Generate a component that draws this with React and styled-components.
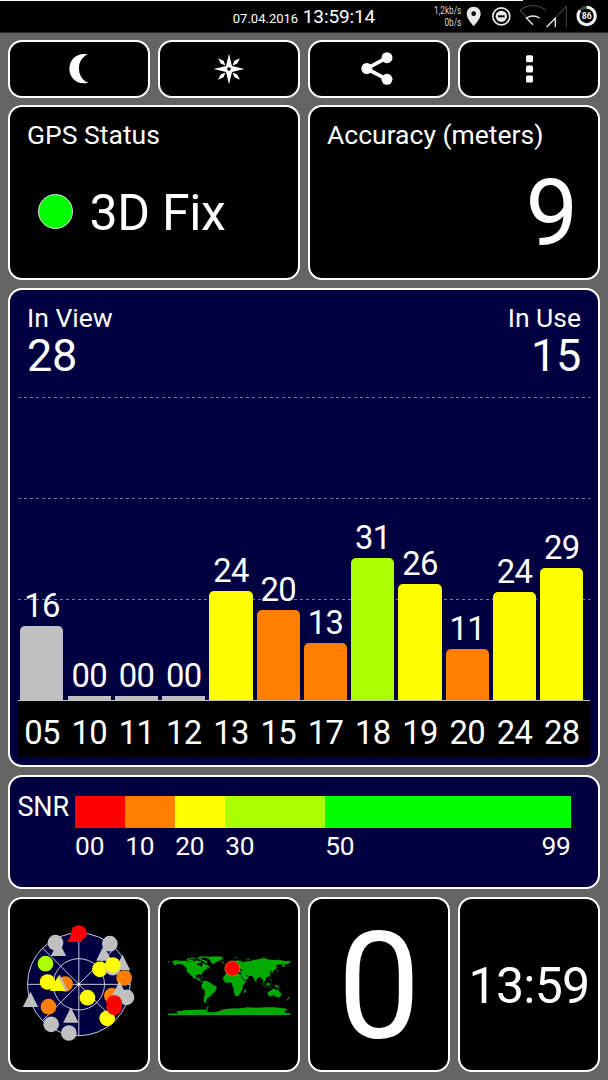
import React from 'react';
import styled, { createGlobalStyle } from 'styled-components';

const satellites = [
  { id: '05', snr: '16', height: 73.5, color: '#c0c0c0' },
  { id: '10', snr: '00', height: 4, color: '#c0c0c0' },
  { id: '11', snr: '00', height: 4, color: '#c0c0c0' },
  { id: '12', snr: '00', height: 4, color: '#c0c0c0' },
  { id: '13', snr: '24', height: 109, color: '#ffff00' },
  { id: '15', snr: '20', height: 90, color: '#ff8000' },
  { id: '17', snr: '13', height: 57, color: '#ff8000' },
  { id: '18', snr: '31', height: 142, color: '#aaff00' },
  { id: '19', snr: '26', height: 115.5, color: '#ffff00' },
  { id: '20', snr: '11', height: 51, color: '#ff8000' },
  { id: '24', snr: '24', height: 108, color: '#ffff00' },
  { id: '28', snr: '29', height: 132, color: '#ffff00' },
];

const scale = [
  { labels: ['00'], color: '#ff0000' },
  { labels: ['10'], color: '#ff8000' },
  { labels: ['20'], color: '#ffff00' },
  { labels: ['30'], color: '#aaff00' },
  { labels: ['50', '99'], color: '#00ff00' },
];

// sky view items in drawing order: c = circle, t = triangle
const sky = [
  ['t', 145, 86, '#c0c0c0'],
  ['c', 136, 68, '#c0c0c0'],
  ['c', 206, 39, '#ff0000'],
  ['c', 106, 131, '#aaff00'],
  ['c', 165, 192, '#ff8000'],
  ['c', 112, 186, '#ffff00'],
  ['c', 115, 260, '#ff8000'],
  ['t', 61, 239, '#c0c0c0'],
  ['t', 182, 286, '#c0c0c0'],
  ['c', 123, 313, '#c0c0c0'],
  ['c', 176, 339, '#c0c0c0'],
  ['t', 281, 100, '#c0c0c0'],
  ['c', 299, 71, '#c0c0c0'],
  ['t', 337, 128, '#c0c0c0'],
  ['c', 269, 148, '#ffff00'],
  ['c', 308, 143, '#c0c0c0'],
  ['c', 308, 135, '#ffff00'],
  ['c', 342, 174, '#ff8000'],
  ['c', 232, 233, '#ffff00'],
  ['c', 305, 227, '#ff8000'],
  ['c', 349, 232, '#c0c0c0'],
  ['t', 328, 207, '#c0c0c0'],
  ['c', 291, 295, '#ffff00'],
  ['c', 312, 249, '#ff0000'],
  ['c', 312, 262, '#ff0000'],
];

function StatusIcons() {
  return (
    <svg width="131" height="32" viewBox="739 0 393 96" fill="none">
      <path
        d="M762 20c-12 0-21 9-21 21 0 16 21 37 21 37s21-21 21-37c0-12-9-21-21-21z"
        fill="#e8e8e8"
      />
      <circle cx="762" cy="41" r="7" fill="#000" />
      <circle cx="845" cy="49" r="25.5" stroke="#e8e8e8" strokeWidth="5" />
      <circle cx="845" cy="49" r="17" fill="#e8e8e8" />
      <rect x="835" y="46" width="20" height="6" fill="#000" />
      <path d="M939 74L901 30Q940 4 978 30" stroke="#3c3c3c" strokeWidth="3.5" />
      <path d="M940 74L920 54Q940 42 960 54" stroke="#e8e8e8" strokeWidth="4" />
      <path d="M982 80L1040 19V82" stroke="#3c3c3c" strokeWidth="3.5" />
      <path d="M981 81L1007 55V82" stroke="#e8e8e8" strokeWidth="4" />
      <circle cx="1101" cy="48" r="26" stroke="#444" strokeWidth="9" />
      <circle
        cx="1101"
        cy="48"
        r="26"
        stroke="#f0f0f0"
        strokeWidth="9"
        pathLength="100"
        strokeDasharray="86 14"
        transform="rotate(-90 1101 48)"
      />
      <text
        x="1101"
        y="58"
        fill="#f0f0f0"
        fontSize="28"
        fontWeight="700"
        textAnchor="middle"
        textLength="30"
        lengthAdjust="spacingAndGlyphs"
      >
        86
      </text>
    </svg>
  );
}

function MoonIcon() {
  return (
    <svg width="20" height="31" viewBox="0 -0.500 20 31">
      <path
        d="M18.6 .8C8 -1.3 .4 6 .4 15.2S8 32 19.3 29.3C12.800 26.500 10 21 10 15S12.600 3.800 18.600 .8z"
        fill="#fff"
      />
    </svg>
  );
}

function CompassIcon() {
  return (
    <svg width="32" height="32" viewBox="-48 -48 96 96" fill="#fff">
      <path d="M0-46L9-9 46 0 9 9 0 46-9 9-46 0-9-9z" />
      {[45, 135, 225, 315].map(angle => (
        <path key={angle} d="M0-46L6-29 1-17-1-17-6-29z" transform={`rotate(${angle})`} />
      ))}
      <circle r="5.500" fill="#000" />
    </svg>
  );
}

function ShareIcon() {
  return (
    <svg width="35.300" height="33" viewBox="171 67 106 99" fill="#fff">
      <path d="M249 84L188 117L249 149" fill="none" stroke="#fff" strokeWidth="11" />
      <circle cx="188.500" cy="116.500" r="16.500" />
      <circle cx="249" cy="84" r="16.500" />
      <circle cx="249" cy="149" r="16.500" />
    </svg>
  );
}

function MoreIcon() {
  return (
    <svg width="7" height="28" viewBox="0 0 7 28" fill="#fff">
      <rect y="0.300" width="7" height="7" rx="1.500" />
      <rect y="10.500" width="7" height="7" rx="1.500" />
      <rect y="20.600" width="7" height="7" rx="1.500" />
    </svg>
  );
}

function SkyView() {
  return (
    <svg width="140" height="130" viewBox="-3.500 -3 420 390">
      <g stroke="#c8c8d8" strokeWidth="3" fill="none">
        <circle cx="206" cy="193" r="154" fill="#000040" />
        <circle cx="206" cy="193" r="77" />
        <path d="M52 193H360M206 39V347M97 84L315 302M97 302L315 84" />
      </g>
      <circle cx="206" cy="193" r="4" fill="#fff" />
      {sky.map(([type, x, y, color], index) =>
        type === 'c' ? (
          <circle key={index} cx={x} cy={y} r="23.500" fill={color} />
        ) : (
          <path key={index} d={`M${x} ${y - 24}L${x + 23} ${y + 22}H${x - 23}z`} fill={color} />
        ),
      )}
      <path d="M195 25L171 66H216z" fill="#ff0000" />
      <path d="M144 168L119 213H166z" fill="#ffff00" />
      <path d="M144 168L149 164 172 210 166 213z" fill="#c0c0c0" />
    </svg>
  );
}

// longitude runs along x and negative latitude along y
function WorldMap() {
  return (
    <svg width="123" height="61.500" viewBox="-178.500 -89.500 360 180" fill="#00aa00">
      <path d="M-168-66L-162-70-156-71-141-70-128-70-115-68-100-68-94-72-90-69-82-68-82-64-88-64-94-60-92-57-83-55-82-52-79-51-79-55-77-57-78-62-72-62-69-59-65-59-61-56-56-52-60-50-66-50-65-48-61-46-66-44-70-43-74-40-76-35-81-31-80-25-83-29-89-30-97-27-97-21-94-18-91-19-90-21-87-21-88-16-83-15-83-10-78-9-80-7-85-10-91-14-96-16-105-20-107-24-114-31-109-23-112-25-117-33-121-35-124-40-124-48-130-54-135-58-145-60-151-60-158-56-164-54-157-58-162-59-165-61-161-64z" />
      <path d="M-180-69L-170-66-180-64zM-125-72L-119-76-115-73-105-73-104-69-117-69zM-90-73L-80-74-68-70-62-66-67-62-73-65-76-69-86-71zM-119-78L-97-79-97-76-116-75zM-92-77L-80-76-82-74-91-75zM-94-79L-84-82-63-83-72-79-82-77z" />
      <path d="M-73-78L-66-81-50-82-32-83-18-81-20-75-24-71-32-68-40-65-43-60-50-62-54-67-55-71-60-76zM-24-65L-16-67-14-65-19-63zM-85-22L-80-23-74-20-78-20zM-74-19L-69-19-70-17zM-60-51L-56-51-53-47-59-48z" />
      <path d="M-78-8L-72-12-62-10-58-7-51-4-48 1-44 2-35 6-38 13-40 21-48 26-52 32-57 36-62 39-65 43-67 48-68 53-73 52-75 47-73 37-71 28-70 18-76 14-81 6-80 1-77-4zM-69 52L-65 55-71 55zM-61 51L-57 52-60 53z" />
      <path d="M-17-15L-17-21-10-30-6-36 10-37 11-33 20-31 32-31 35-27 38-19 43-11 51-12 47-4 40 3 40 14 35 20 33 27 27 33 20 35 17 30 14 20 13 10 9 1 9-4 4-6-8-5-13-8zM44 25L44 18 49 13 50 17 47 25z" />
      <path d="M-9-37L-9-43-1-44-4-48 3-51 8-54 8-57 11-57 12-54 20-55 24-59 29-60 23-61 25-65 18-61 15-56 11-59 5-59 5-62 14-68 25-71 40-68 40-66 33-66 40-64 44-67 54-68 66-69 68-73 74-72 84-74 98-76 104-78 113-74 128-72 140-73 152-71 160-70 170-69 180-69 180-65 173-64 179-62 170-60 163-58 163-54 157-51 156-57 163-62 155-59 143-59 136-54 141-51 135-43 128-40 129-35 126-34 125-38 121-39 118-38 122-37 119-34 122-30 120-26 110-21 106-19 109-14 105-9 100-13 103-5 104-1 100-6 98-16 94-18 91-23 87-21 80-15 80-9 77-8 73-16 72-21 67-25 57-25 51-28 48-30 52-24 56-24 59-22 55-17 45-13 40-20 35-28 35-36 27-37 28-41 41-41 38-44 30-46 27-42 22-37 19-42 13-45 18-40 15-38 12-42 8-44 0-41-2-37z" />
      <path d="M-6-50L1-51-1-55-3-58-6-58-4-54zM-10-52L-6-55-6-52zM50-72L56-75 67-77 57-73 57-71zM12-78L22-80 27-80 18-77zM95-80L105-79 98-78zM138-75L150-76 146-74zM131-31L135-34 140-36 141-42 145-43 142-39 141-35 134-34zM142-54L144-49 142-46zM120-18L122-18 125-12 122-13zM120-24L122-25 121-22zM80-9L82-7 80-6z" />
      <path d="M95-5L99-3 106 5 105 6 99 0zM106 6L114 8 114 9 106 7zM109-2L117-7 119-5 116 4 110 3zM119 5L120-1 125-1 121 1 123 5zM118 8L128 9 121 10zM122-7L126-9 126-6zM131 1L141 2 147 6 150 11 143 8 138 8 133 3zM127-1L129-1 128 2z" />
      <path d="M114 22L114 26 116 34 123 34 131 31 136 35 141 38 147 38 153 31 153 26 146 19 142 11 140 17 136 15 136 12 131 12 126 14 122 18zM145 41L148 41 147 44zM173 35L178 38 174 42 171 46 167 46 173 41zM164 20L167 22 166 22z" />
      <path d="M-180 85L-153 85-150 82-154 78-147 77-131 75-100 74-80 73-65 74-67 68-60 64-57 64-63 69-62 75-65 80-42 81-28 77-15 72 5 70 35 69 55 66 80 68 110 66 135 66 165 70 172 73 163 78 165 83 180 85V90H-180z" />
      <circle cx="10" cy="-47" r="22" fill="#ff0000" stroke="#e09000" strokeWidth="2" />
    </svg>
  );
}

function App() {
  return (
    <>
      <GlobalStyle />
      <Screen>
        <StatusBar>
          <span />
          <Clock>
            <small>07.04.2016</small> 13:59:14
          </Clock>
          <StatusRight>
            <Speed>
              1,2kb/s
              <br />
              0b/s
            </Speed>
            <StatusIcons />
          </StatusRight>
        </StatusBar>
        <Dashboard>
          <Panel $center>
            <MoonIcon />
          </Panel>
          <Panel $center>
            <CompassIcon />
          </Panel>
          <Panel $center>
            <ShareIcon />
          </Panel>
          <Panel $center>
            <MoreIcon />
          </Panel>

          <InfoPanel $span={2}>
            <Title>GPS Status</Title>
            <Fix>
              <FixDot />
              3D Fix
            </Fix>
          </InfoPanel>
          <InfoPanel $span={2}>
            <Title>Accuracy (meters)</Title>
            <Accuracy>9</Accuracy>
          </InfoPanel>

          <ChartPanel $span={4} $blue>
            <ChartHeader>
              <Counter>
                <Title>In View</Title>
                <strong>28</strong>
              </Counter>
              <Counter $right>
                <Title>In Use</Title>
                <strong>15</strong>
              </Counter>
            </ChartHeader>
            <Plot>
              <GridLines>
                <GridLine />
                <GridLine />
                <GridLine />
              </GridLines>
              <Bars>
                {satellites.map(({ id, snr, height, color }) => (
                  <BarColumn key={id}>
                    <span>{snr}</span>
                    <Bar $color={color} $flat={height < 5} style={{ height }} />
                  </BarColumn>
                ))}
              </Bars>
            </Plot>
            <Axis>
              {satellites.map(({ id }) => (
                <span key={id}>{id}</span>
              ))}
            </Axis>
          </ChartPanel>

          <ScalePanel $span={4} $blue>
            <ScaleTitle>SNR</ScaleTitle>
            <Scale>
              {scale.map(({ labels, color }) => (
                <div key={color}>
                  <Swatch $color={color} />
                  <ScaleLabels>
                    {labels.map(label => (
                      <span key={label}>{label}</span>
                    ))}
                  </ScaleLabels>
                </div>
              ))}
            </Scale>
          </ScalePanel>

          <Panel $center>
            <SkyView />
          </Panel>
          <Panel $center>
            <WorldMap />
          </Panel>
          <Panel $center>
            <Speedometer>0</Speedometer>
          </Panel>
          <Panel $center>
            <Time>13:59</Time>
          </Panel>
        </Dashboard>
      </Screen>
    </>
  );
}

export default App;

const GlobalStyle = createGlobalStyle`
  * {
    box-sizing: border-box;
  }

  body {
    margin: 0;
    background-color: #646464;
    color: #ffffff;
    font-family: Roboto, 'Liberation Sans', sans-serif;
  }

  svg {
    display: block;
    flex-shrink: 0;
  }
`;

const Screen = styled.div`
  display: flex;
  flex-direction: column;
  width: 608px;
  height: 1080px;
  overflow: hidden;
`;

const StatusBar = styled.header`
  display: grid;
  grid-template-columns: 1fr auto 1fr;
  height: 33px;
  padding: 0 11px;
  border-bottom: 1px solid #2c2c2c;
  background: linear-gradient(#ffffff, #ffffff) 0 0 / 523px 1px no-repeat #000000;
`;

const Clock = styled.div`
  padding-top: 7px;
  font-size: 19px;
  line-height: 20px;
  letter-spacing: -0.1px;
  white-space: nowrap;

  small {
    font-size: 13px;
    letter-spacing: 0;
  }
`;

const StatusRight = styled.div`
  display: flex;
  justify-content: flex-end;
`;

const Speed = styled.div`
  padding: 5px 6px 0 0;
  font-size: 10px;
  line-height: 11.5px;
  text-align: right;
  color: #d8d8d8;
  transform: scaleX(0.82);
  transform-origin: right;
`;

const Dashboard = styled.main`
  display: grid;
  grid-template-columns: repeat(4, 142px);
  grid-template-rows: 57.5px 175px 480px 114px 175px;
  gap: 7.600px 8px;
  padding: 7px 8px 0;
`;

const Panel = styled.section`
  grid-column: span ${props => props.$span || 1};
  display: flex;
  align-items: center;
  justify-content: ${props => (props.$center ? 'center' : 'flex-start')};
  min-width: 0;
  min-height: 0;
  border: 2px solid #ffffff;
  border-radius: 14px;
  background-color: ${props => (props.$blue ? '#000040' : '#000000')};
`;

const InfoPanel = styled(Panel)`
  flex-direction: column;
  align-items: stretch;
  padding: 14px 20px 0 17px;
`;

const Title = styled.div`
  font-size: 26.5px;
  line-height: 27px;
`;

const Fix = styled.div`
  display: flex;
  align-items: center;
  gap: 16.500px;
  margin-top: 40px;
  padding-left: 11px;
  font-size: 50px;
  line-height: 50px;
  letter-spacing: -0.3px;
`;

const FixDot = styled.span`
  width: 35px;
  height: 35px;
  margin-bottom: 4px;
  border: 1px solid #e0e0e0;
  border-radius: 50%;
  background-color: #00ff00;
`;

const Accuracy = styled.div`
  margin-top: 19px;
  font-size: 93.5px;
  line-height: 93px;
  text-align: right;
`;

const ChartPanel = styled(Panel)`
  flex-direction: column;
  align-items: stretch;
  margin-bottom: 1px;
  padding: 14px 8px 0;
`;

const ChartHeader = styled.div`
  display: flex;
  justify-content: space-between;
  height: 93px;
  padding: 0 9px;
`;

const Counter = styled.div`
  text-align: ${props => (props.$right ? 'right' : 'left')};

  strong {
    display: block;
    margin-top: 3px;
    font-size: 45px;
    font-weight: 400;
    line-height: 44px;
    letter-spacing: -0.3px;
  }
`;

const Plot = styled.div`
  display: grid;
  height: 303px;
`;

const GridLines = styled.div`
  grid-area: 1 / 1;
`;

const GridLine = styled.div`
  height: 101px;
  background: repeating-linear-gradient(90deg, #7c7c9c 0 3px, transparent 3px 6px) 0 0 / 100% 1px
    no-repeat;
`;

const Bars = styled.div`
  grid-area: 1 / 1;
  display: grid;
  grid-template-columns: repeat(12, 43.2px);
  align-items: end;
  column-gap: 4.080px;
  padding-left: 2.300px;
`;

const BarColumn = styled.div`
  display: flex;
  flex-direction: column;
  align-items: center;
  font-size: 32.8px;
  line-height: 32px;
  letter-spacing: -0.7px;
`;

const Bar = styled.div`
  width: 100%;
  margin-top: 4px;
  border-radius: ${props => (props.$flat ? 0 : '5px 5px 0 0')};
  background-color: ${props => props.$color};
`;

const Axis = styled.div`
  display: grid;
  grid-template-columns: repeat(12, 43.2px);
  column-gap: 4.080px;
  height: 57px;
  padding: 16.500px 0 0 2.300px;
  border-top: 1px solid #c0c0c0;
  background-color: #000000;
  font-size: 32.8px;
  line-height: 32px;
  letter-spacing: -0.7px;
  text-align: center;
`;

const ScalePanel = styled(Panel)`
  align-items: flex-start;
  padding: 17px 0 0 7.500px;
`;

const ScaleTitle = styled.div`
  width: 57px;
  font-size: 27px;
  line-height: 27px;
  letter-spacing: -0.2px;
`;

const Scale = styled.div`
  display: grid;
  grid-template-columns: 50.2px 50px 50px 100px 246px;
  padding-top: 2px;
`;

const Swatch = styled.div`
  height: 31.500px;
  background-color: ${props => props.$color};
`;

const ScaleLabels = styled.div`
  display: flex;
  justify-content: space-between;
  margin-top: 5px;
  padding-left: 0.600px;
  font-size: 26.3px;
  line-height: 26px;
  letter-spacing: -0.2px;
`;

const Speedometer = styled.div`
  padding-top: 6px;
  font-size: 148px;
  line-height: 175px;
`;

const Time = styled.div`
  padding-top: 4px;
  font-size: 50px;
  line-height: 56px;
  letter-spacing: -0.7px;
`;
